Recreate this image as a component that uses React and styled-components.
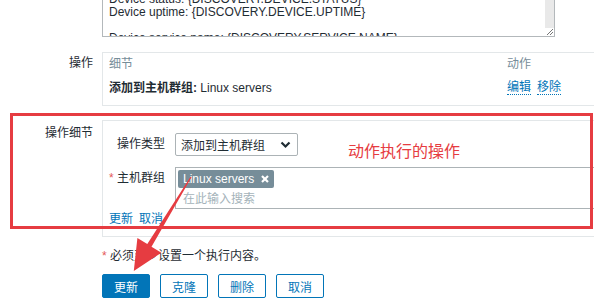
import React from "react";
import styled, { createGlobalStyle } from "styled-components";

const GlobalStyle = createGlobalStyle`
  html, body { margin: 0; padding: 0; background: #ffffff; overflow: hidden; }
  body {
    font-family: "Liberation Sans", Arial, "Noto Sans CJK SC", sans-serif;
    font-size: 12px;
    color: #1f2c33;
  }
  * { box-sizing: border-box; }
`;

const Page = styled.div`
  position: relative;
  width: 594px;
  height: 305px;
  overflow: hidden;
`;

const Form = styled.div`
  display: flex;
  flex-direction: column;
`;

const Row = styled.div`
  display: grid;
  grid-template-columns: 93px 1fr;
  column-gap: 9px;
  margin-top: ${(p) => p.$mt || 0}px;
  align-items: start;
`;

const Label = styled.div`
  text-align: right;
  line-height: 14px;
  padding-top: ${(p) => p.$pt || 0}px;
  white-space: nowrap;
`;

const Textarea = styled.div`
  margin-top: -12px;
  width: 453px;
  height: 49px;
  border: 1px solid #b3b8bb;
  display: flex;
  overflow: hidden;
  background: #fff;
`;

const TextCol = styled.div`
  flex: 1;
  padding: 4px 6px 0;
  line-height: 13px;
  white-space: pre;
  overflow: hidden;
`;

const ScrollCol = styled.div`
  width: 9px;
  background: #e9e9e9;
  display: flex;
  flex-direction: column;
  justify-content: flex-end;
`;

const Grip = styled.div`
  width: 9px;
  height: 8px;
  background: #ffffff;
  display: flex;
`;

const OpsBox = styled.div`
  width: 520px;
  border: 1px solid #e3e7e9;
  padding: 4px 6px 10px;
  display: grid;
  grid-template-columns: 398px auto;
  row-gap: 10px;
  line-height: 14px;
`;

const HeadCell = styled.div`
  color: #768d99;
`;

const Bold = styled.b`
  font-weight: bold;
`;

const Links = styled.div`
  display: flex;
  gap: 6px;
`;

const Link = styled.span`
  color: #0275b8;
  border-bottom: 1px dotted #0275b8;
  line-height: 13px;
  display: inline-block;
`;

const DetailBox = styled.div`
  width: 520px;
  border: 1px solid #e3e7e9;
  padding: 12px 6px 9px;
  display: flex;
  flex-direction: column;
`;

const InnerRow = styled.div`
  display: grid;
  grid-template-columns: 56px 1fr;
  column-gap: 10px;
  margin-top: ${(p) => p.$mt || 0}px;
  align-items: start;
`;

const InnerLabel = styled.div`
  text-align: right;
  white-space: nowrap;
  line-height: ${(p) => p.$lh || 14}px;
  padding-top: ${(p) => p.$pt || 0}px;
`;

const Asterisk = styled.span`
  color: #e45959;
`;

const Select = styled.div`
  width: 123px;
  height: 23px;
  border: 1px solid #acb3b6;
  border-radius: 2px;
  display: flex;
  align-items: center;
  justify-content: space-between;
  padding: 0 6px 0 5px;
  background: #fff;
`;

const MultiSelect = styled.div`
  width: 430px;
  height: 42px;
  border: 1px solid #acb3b6;
  padding: 2px 2px 3px;
  display: flex;
  flex-direction: column;
  align-items: flex-start;
  background: #fff;
`;

const Tag = styled.div`
  height: 18px;
  background: #768d99;
  color: #ffffff;
  border-radius: 2px;
  display: flex;
  align-items: center;
  gap: 7px;
  padding: 0 5px 0 5px;
  line-height: 18px;
`;

const Placeholder = styled.div`
  margin-top: 4px;
  padding-left: 5px;
  line-height: 14px;
  color: #a4b3ba;
`;

const LinkRow = styled(Links)`
  margin-top: 4px;
`;

const Note = styled.div`
  line-height: 14px;
  white-space: nowrap;
`;

const Buttons = styled.div`
  display: flex;
  gap: 10px;
`;

const Button = styled.div`
  width: 48px;
  height: 24px;
  border-radius: 2px;
  border: 1px solid #0275b8;
  background: ${(p) => (p.$primary ? "#0275b8" : "#ffffff")};
  color: ${(p) => (p.$primary ? "#ffffff" : "#0275b8")};
  display: flex;
  align-items: center;
  justify-content: center;
`;

const RedFrame = styled.div`
  position: absolute;
  left: 10px;
  top: 113px;
  width: 583px;
  height: 116px;
  border: 3px solid #e63c41;
  pointer-events: none;
`;

const Annotation = styled.div`
  position: absolute;
  left: 348px;
  top: 140px;
  font-size: 16px;
  line-height: 20px;
  color: #e63c41;
  font-family: "Noto Sans CJK SC", sans-serif;
  white-space: nowrap;
`;

const ArrowLayer = styled.svg`
  position: absolute;
  left: 0;
  top: 0;
  pointer-events: none;
`;

export default function App() {
  return (
    <Page>
      <GlobalStyle />
      <Form>
        <Row>
          <Label />
          <Textarea>
            <TextCol>
              {"Device status: {DISCOVERY.DEVICE.STATUS}\nDevice uptime: {DISCOVERY.DEVICE.UPTIME}\n\nDevice service name: {DISCOVERY.SERVICE.NAME}"}
            </TextCol>
            <ScrollCol>
              <Grip>
                <svg width="9" height="8" viewBox="0 0 9 8">
                  <line x1="2" y1="7" x2="8" y2="1" stroke="#777" strokeWidth="1" />
                  <line x1="5" y1="7" x2="8" y2="4" stroke="#777" strokeWidth="1" />
                </svg>
              </Grip>
            </ScrollCol>
          </Textarea>
        </Row>

        <Row $mt={15}>
          <Label $pt={4}>操作</Label>
          <OpsBox>
            <HeadCell>细节</HeadCell>
            <HeadCell>动作</HeadCell>
            <div>
              <Bold>添加到主机群组:</Bold> Linux servers
            </div>
            <Links>
              <Link>编辑</Link>
              <Link>移除</Link>
            </Links>
          </OpsBox>
        </Row>

        <Row $mt={14}>
          <Label $pt={6}>操作细节</Label>
          <DetailBox>
            <InnerRow>
              <InnerLabel $lh={23}>操作类型</InnerLabel>
              <Select>
                <span>添加到主机群组</span>
                <svg width="11" height="8" viewBox="0 0 11 8">
                  <polyline points="1.5,1.5 5.5,5.5 9.5,1.5" fill="none" stroke="#1f2c33" strokeWidth="2.2" />
                </svg>
              </Select>
            </InnerRow>
            <InnerRow $mt={11}>
              <InnerLabel $pt={4}>
                <Asterisk>*</Asterisk> 主机群组
              </InnerLabel>
              <MultiSelect>
                <Tag>
                  <span>Linux servers</span>
                  <svg width="8" height="8" viewBox="0 0 8 8">
                    <line x1="1" y1="1" x2="7" y2="7" stroke="#fff" strokeWidth="2.2" />
                    <line x1="7" y1="1" x2="1" y2="7" stroke="#fff" strokeWidth="2.2" />
                  </svg>
                </Tag>
                <Placeholder>在此输入搜索</Placeholder>
              </MultiSelect>
            </InnerRow>
            <LinkRow>
              <Link>更新</Link>
              <Link>取消</Link>
            </LinkRow>
          </DetailBox>
        </Row>

        <Row $mt={12}>
          <Label />
          <Note>
            <Asterisk>*</Asterisk> 必须至少设置一个执行内容。
          </Note>
        </Row>

        <Row $mt={11}>
          <Label />
          <Buttons>
            <Button $primary>更新</Button>
            <Button>克隆</Button>
            <Button>删除</Button>
            <Button>取消</Button>
          </Buttons>
        </Row>
      </Form>

      <RedFrame />
      <Annotation>动作执行的操作</Annotation>
      <ArrowLayer width="594" height="305" viewBox="0 0 594 305">
        <polygon
          points="191.5,177.3 151.5,246.7 161.4,252.7 133.8,271 137.4,238.1 147.3,244.1 190.5,176.7"
          fill="#e63c41"
        />
      </ArrowLayer>
    </Page>
  );
}
